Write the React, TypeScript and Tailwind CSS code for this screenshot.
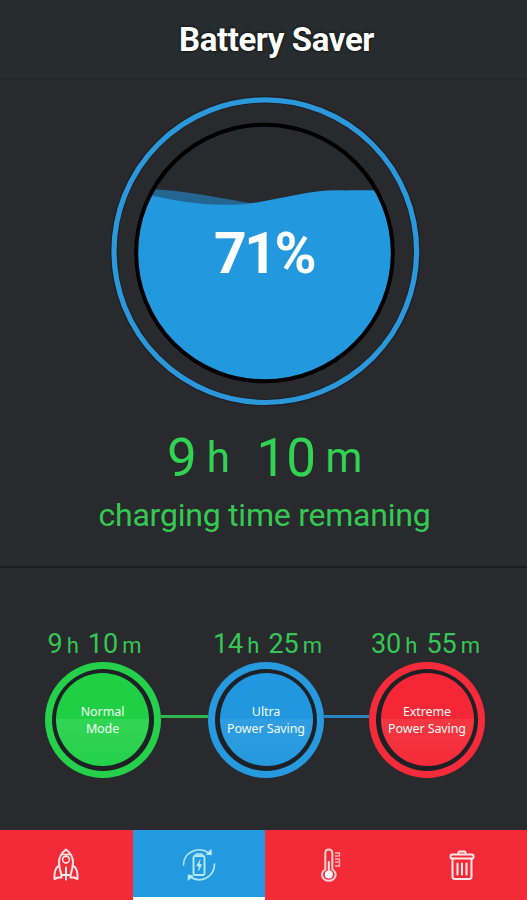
import type { ReactNode } from "react";

type Mode = {
  hours: string;
  minutes: string;
  label: [string, string];
  ring: string;
  fill: string;
  timeOffset: string;
};

const modes: Mode[] = [
  {
    hours: "9",
    minutes: "10",
    label: ["Normal", "Mode"],
    ring: "bg-[#25d04b]",
    fill: "bg-linear-to-b from-[#20d044] from-50% via-[#33d555] via-50% to-[#25d149]",
    timeOffset: "ml-[2.5px]",
  },
  {
    hours: "14",
    minutes: "25",
    label: ["Ultra", "Power Saving"],
    ring: "bg-[#2699df]",
    fill: "bg-linear-to-b from-[#2097de] from-50% via-[#309ee0] via-50% to-[#2498de]",
    timeOffset: "ml-[4.5px]",
  },
  {
    hours: "30",
    minutes: "55",
    label: ["Extreme", "Power Saving"],
    ring: "bg-[#f52b39]",
    fill: "bg-linear-to-b from-[#f52635] from-50% via-[#f53744] via-50% to-[#f52a38]",
    timeOffset: "ml-[0.5px]",
  },
];

function Gauge() {
  return (
    <div className="relative mx-auto h-[310px] w-[310px]">
      <svg className="block h-full w-full" viewBox="0 0 310 310" fill="none">
        <defs>
          <clipPath id="tank">
            <circle cx="154.5" cy="157" r="127" />
          </clipPath>
        </defs>
        <circle cx="155.3" cy="155.2" r="151.5" stroke="#1f2023" strokeWidth="7.5" />
        <circle cx="155.3" cy="155.2" r="151.3" stroke="#2c98dc" strokeWidth="5.2" />
        <g clipPath="url(#tank)">
          <path d="M0 94C60 90 90 99 146 108L146 130H0Z" fill="#256592" />
          <path
            d="M20 95C70 106 96 111 136 108C170 104 200 93 235 94.500C265 94 275 94.500 310 97V310H20Z"
            fill="#2299df"
          />
        </g>
        <circle cx="154.5" cy="157" r="128.3" stroke="#000" strokeWidth="4" />
      </svg>
      <span className="absolute top-[124px] left-[104px] text-[57px] leading-[68px] font-bold tracking-[-2.500px] text-white">
        71%
      </span>
    </div>
  );
}

function ModeTime({ mode }: { mode: Mode }) {
  return (
    <div
      className={`flex w-[116px] items-baseline justify-center text-[27px] leading-8 whitespace-nowrap text-[#36c655] ${mode.timeOffset}`}
    >
      <span>{mode.hours}</span>
      <span className="ml-[4px] text-[22px]">h</span>
      <span className="ml-[9px]">{mode.minutes}</span>
      <span className="ml-[4px] text-[22px]">m</span>
    </div>
  );
}

function ModeButton({ mode }: { mode: Mode }) {
  return (
    <button className={`h-[116px] w-[116px] shrink-0 rounded-full p-[7px] ${mode.ring}`}>
      <span className="block h-full w-full rounded-full bg-[#1d2126] p-[4.5px]">
        <span
          className={`flex h-full w-full flex-col items-center justify-center rounded-full font-['Noto_Sans',sans-serif] text-[12.5px] leading-[17px] tracking-[-0.1px] whitespace-nowrap text-[#effaf4] ${mode.fill}`}
        >
          <span>{mode.label[0]}</span>
          <span>{mode.label[1]}</span>
        </span>
      </span>
    </button>
  );
}

function Icon({ children }: { children: ReactNode }) {
  return (
    <svg
      className="h-9 w-9"
      viewBox="0 0 36 36"
      fill="none"
      stroke="#ffe9e8"
      strokeWidth="2"
      strokeLinecap="round"
      strokeLinejoin="round"
    >
      {children}
    </svg>
  );
}

function RocketIcon() {
  return (
    <Icon>
      <path d="M18 2.500C13.500 6 11 10.500 11 15.500C11 19.500 12 23.500 13.500 28H22.500C24 23.500 25 19.500 25 15.500C25 10.500 22.500 6 18 2.500Z" />
      <path d="M14.500 7.500H21.500" strokeWidth="1.600" />
      <circle cx="18" cy="12.500" r="3.400" strokeWidth="1.600" />
      <path d="M11 18.500C7.500 20.500 6 24 6.500 32L10 30.500H13.500V28" />
      <path d="M25 18.500C28.500 20.500 30 24 29.500 32L26 30.500H22.500V28" />
      <path d="M18 20.500V32.500" />
    </Icon>
  );
}

function BatteryIcon() {
  return (
    <Icon>
      <g stroke="#b5e8f5" strokeWidth="1.600">
        <path d="M2.500 18C2.500 5.500 17 -1.500 28 6" />
        <path d="M33.500 17C33.500 29.500 20 37.500 8.500 29.500" />
        <path d="M25.500 7.500L30.500 7.700L30 2.800Z" fill="#c5eff8" strokeWidth="0.800" />
        <path d="M7 33L7.200 27.800L12 28.800Z" fill="#c5eff8" strokeWidth="0.800" />
        <rect x="12.500" y="9" width="11" height="19" rx="1.500" strokeWidth="1.900" />
        <path d="M15 8.500V7H21V8.500" />
        <path d="M19 13L15.500 19H18L17.500 24L20.800 17.500H18.500Z" fill="#c5eff8" strokeWidth="0.500" />
      </g>
    </Icon>
  );
}

function ThermometerIcon() {
  return (
    <Icon>
      <path
        d="M12.300 22.500V6.300C12.300 1.300 19.300 1.300 19.300 6.300V22.500C25.500 26.500 22 33.700 15.800 33.700C9.600 33.700 6.100 26.500 12.300 22.500Z"
        stroke="#ffd0d0"
      />
      <circle cx="15.800" cy="27.500" r="4" fill="#fff" stroke="none" />
      <path d="M15.800 15V27" />
      <g stroke="#ffb5b8" strokeWidth="1.400">
        <path d="M22.500 6H26.500M22.500 9H25M22.500 12H26.500M22.500 15H25M22.500 19H26.500M26.500 6V9M26.500 12V19" />
      </g>
    </Icon>
  );
}

function TrashIcon() {
  return (
    <Icon>
      <path d="M14.500 7V5.500Q14.500 4.500 15.500 4.500H20.500Q21.500 4.500 21.500 5.500V7" />
      <rect x="6.500" y="7.500" width="23" height="4" rx="1.800" />
      <path d="M8.500 12V29.500Q8.500 32 11 32H25Q27.500 32 27.500 29.500V12" />
      <path d="M13.500 16.500V27.500M18 16.500V27.500M22.500 16.500V27.500" />
    </Icon>
  );
}

export default function App() {
  return (
    <div className="flex h-[900px] w-[527px] flex-col overflow-hidden bg-[#292a2e] font-[Roboto,sans-serif]">
      <header className="flex h-[80px] shrink-0 justify-center border-b-2 border-[#242629] bg-[#272c2f] pt-[20px] pl-[26px]">
        <h1 className="text-[33px] leading-[40px] font-bold tracking-[-0.4px] whitespace-nowrap text-white [text-shadow:0_0_3px_#000]">
          Battery Saver
        </h1>
      </header>

      {/* Charge level */}
      <main className="flex h-[488px] shrink-0 flex-col border-b-2 border-[#1d1e21] pt-[16px] pl-[3px]">
        <Gauge />
        <div className="mt-[22px] ml-[164px] flex h-[60px] items-baseline text-[53px] leading-[60px] text-[#31d353]">
          <span>9</span>
          <span className="ml-[10px] -translate-y-[4px] text-[42px]">h</span>
          <span className="ml-[26.500px]">10</span>
          <span className="ml-[9.500px] -translate-y-[4px] text-[42px]">m</span>
        </div>
        <p className="mt-[7px] ml-[95.500px] text-[32px] leading-[40px] tracking-[-0.230px] whitespace-nowrap text-[#35c853]">
          charging time remaning
        </p>
      </main>

      {/* Power modes */}
      <section className="h-[262px] shrink-0 pt-[60px]">
        <div className="flex h-8">
          <div className="w-[163px] pl-[34px]">
            <ModeTime mode={modes[0]} />
          </div>
          <div className="w-[162px] pl-[42px]">
            <ModeTime mode={modes[1]} />
          </div>
          <div className="w-[162px] pl-[42px]">
            <ModeTime mode={modes[2]} />
          </div>
        </div>
        <div className="mt-[1.500px] flex items-center pl-[44.500px]">
          <ModeButton mode={modes[0]} />
          <div className="mb-[7px] h-[3px] w-[47.500px] bg-[#31b652]" />
          <ModeButton mode={modes[1]} />
          <div className="mb-[7px] h-[3px] w-[45px] bg-[#2a84bd]" />
          <ModeButton mode={modes[2]} />
        </div>
      </section>

      <nav className="grid h-[70px] shrink-0 grid-cols-[132.500px_132.500px_131px_131px] bg-[#f32b38]">
        <button className="flex items-center justify-center">
          <RocketIcon />
        </button>
        <button className="flex items-center justify-center border-b-3 border-white bg-[#2399df] pt-[3px]">
          <BatteryIcon />
        </button>
        <button className="flex items-center justify-center">
          <ThermometerIcon />
        </button>
        <button className="flex items-center justify-center">
          <TrashIcon />
        </button>
      </nav>
    </div>
  );
}
